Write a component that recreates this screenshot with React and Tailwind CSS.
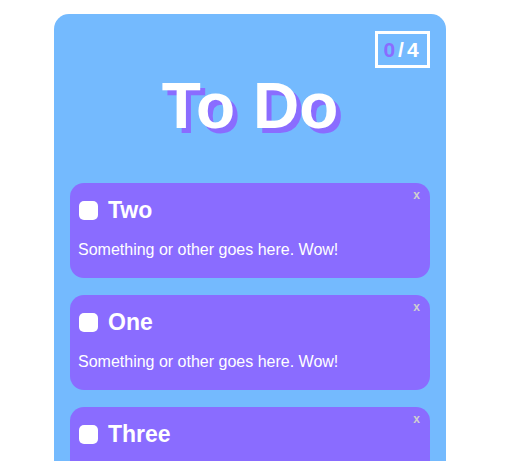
import React from "react";

const items = [
  { title: "Two", body: "Something or other goes here. Wow!" },
  { title: "One", body: "Something or other goes here. Wow!" },
  { title: "Three", body: "Something or other goes here. Wow!" },
  { title: "Four", body: "Something or other goes here. Wow!" },
];

export default function App() {
  return (
    <div className="min-h-screen bg-white" style={{ fontFamily: '"Liberation Sans", Arial, sans-serif' }}>
      <div className="ml-[54px] mt-[14px] w-[392px] rounded-[15px] bg-[#74bafe] p-4 flex flex-col">
        <div className="self-end mt-px w-[55px] h-[37px] border-[3px] border-white flex items-center justify-center text-[21px] font-bold tracking-[3px] text-white">
          <span className="text-[#8a6cff]">0</span>
          <span>/</span>
          <span>4</span>
        </div>
        <h1 className="mt-[6px] text-center text-[64px] font-bold leading-none text-white [text-shadow:5px_5px_0_#8a6cff]">
          To Do
        </h1>
        <div className="mt-[45px] flex flex-col gap-[17px]">
          {items.map((it) => (
            <div key={it.title} className="relative rounded-[14px] bg-[#8a6cff] pl-2 pr-2 pt-[13px] pb-[19px] text-white">
              <span className="absolute top-[3px] right-[10px] text-[12px] font-bold text-[#cfcfcf]">x</span>
              <div className="flex items-center h-[28px]">
                <div className="w-[19px] h-[19px] rounded-[5px] bg-white ml-px" />
                <h2 className="ml-[10px] text-[23px] font-bold leading-7">{it.title}</h2>
              </div>
              <p className="mt-[17px] text-[16px] leading-[18px]">{it.body}</p>
            </div>
          ))}
        </div>
      </div>
    </div>
  );
}
